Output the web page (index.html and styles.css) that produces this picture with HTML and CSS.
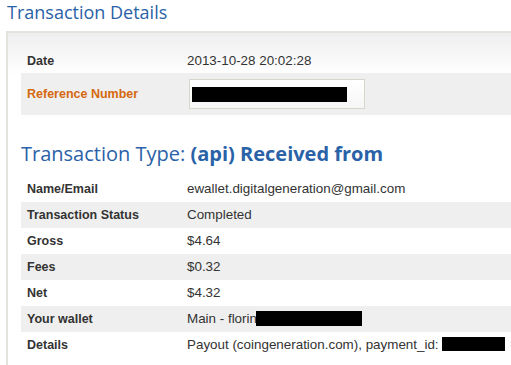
FILE: index.html
```html
<!DOCTYPE html>
<html>
<head>
<meta charset="utf-8">
<link rel="stylesheet" href="styles.css">
</head>
<body>
<h1 class="title">Transaction Details</h1>
<div class="panel">
  <div class="row row-date">
    <div class="label">Date</div>
    <div class="value">2013-10-28 20:02:28</div>
  </div>
  <div class="row row-ref shaded">
    <div class="label ref">Reference Number</div>
    <div class="value"><div class="input"><span class="redact redact-ref"></span></div></div>
  </div>
  <h2 class="type">Transaction Type: <b>(api) Received from</b></h2>
  <div class="row">
    <div class="label">Name/Email</div>
    <div class="value">ewallet.digitalgeneration@gmail.com</div>
  </div>
  <div class="row shaded">
    <div class="label">Transaction Status</div>
    <div class="value">Completed</div>
  </div>
  <div class="row">
    <div class="label">Gross</div>
    <div class="value">$4.64</div>
  </div>
  <div class="row shaded">
    <div class="label">Fees</div>
    <div class="value">$0.32</div>
  </div>
  <div class="row">
    <div class="label">Net</div>
    <div class="value">$4.32</div>
  </div>
  <div class="row shaded">
    <div class="label">Your wallet</div>
    <div class="value">Main - florin<span class="redact redact-wallet"></span></div>
  </div>
  <div class="row">
    <div class="label">Details</div>
    <div class="value">Payout (coingeneration.com), payment_id: <span class="redact redact-pid"></span></div>
  </div>
</div>
</body>
</html>
```
FILE: styles.css
```css
html, body {
  margin: 0;
  padding: 0;
  background: #fff;
  overflow: hidden;
}
body {
  width: 511px;
  height: 365px;
  font-family: "Liberation Sans", Arial, sans-serif;
  color: #333;
}
.title {
  margin: 0;
  padding: 1px 0 0 7px;
  height: 31px;
  box-sizing: border-box;
  font-family: "Open Sans", sans-serif;
  font-weight: 400;
  font-size: 18px;
  line-height: 22px;
  color: #2a62a8;
}
.panel {
  margin-left: 6px;
  border-top: 2px solid #e4e4de;
  border-left: 2px solid #e4e4de;
  padding: 15px 0 0 13px;
  height: 330px;
  background: linear-gradient(#eeeeee 0px, #ffffff 42px);
}
.row {
  display: grid;
  grid-template-columns: 160px 1fr;
  align-items: center;
  height: 26px;
  padding-left: 6px;
  white-space: nowrap;
}
.row-date {
  height: 25px;
}
.row-ref {
  height: 42px;
}
.shaded {
  background: #efefef;
}
.label {
  font-weight: 700;
  font-size: 12.5px;
  color: #333;
}
.label.ref {
  color: #d4690f;
}
.value {
  font-size: 13.4px;
  line-height: 16px;
  color: #333;
}
.input {
  width: 176px;
  height: 30px;
  box-sizing: border-box;
  border: 1px solid #d6d6cc;
  background: linear-gradient(#ffffff, #f6f6f6);
  padding: 6px 0 0 2px;
  margin-left: 2px;
}
.redact {
  display: inline-block;
  vertical-align: middle;
  background: #000;
}
.redact-ref {
  width: 155px;
  height: 15px;
}
.redact-wallet {
  width: 106px;
  height: 15px;
  margin-left: -1px;
  margin-top: -2px;
}
.redact-pid {
  width: 63px;
  height: 14px;
  margin-top: -2px;
}
.type {
  margin: 0;
  padding: 26px 0 10px 0;
  font-family: "Open Sans", sans-serif;
  font-weight: 400;
  font-size: 20px;
  line-height: 25px;
  color: #2a62a8;
}
.type b {
  font-weight: 700;
}
```
